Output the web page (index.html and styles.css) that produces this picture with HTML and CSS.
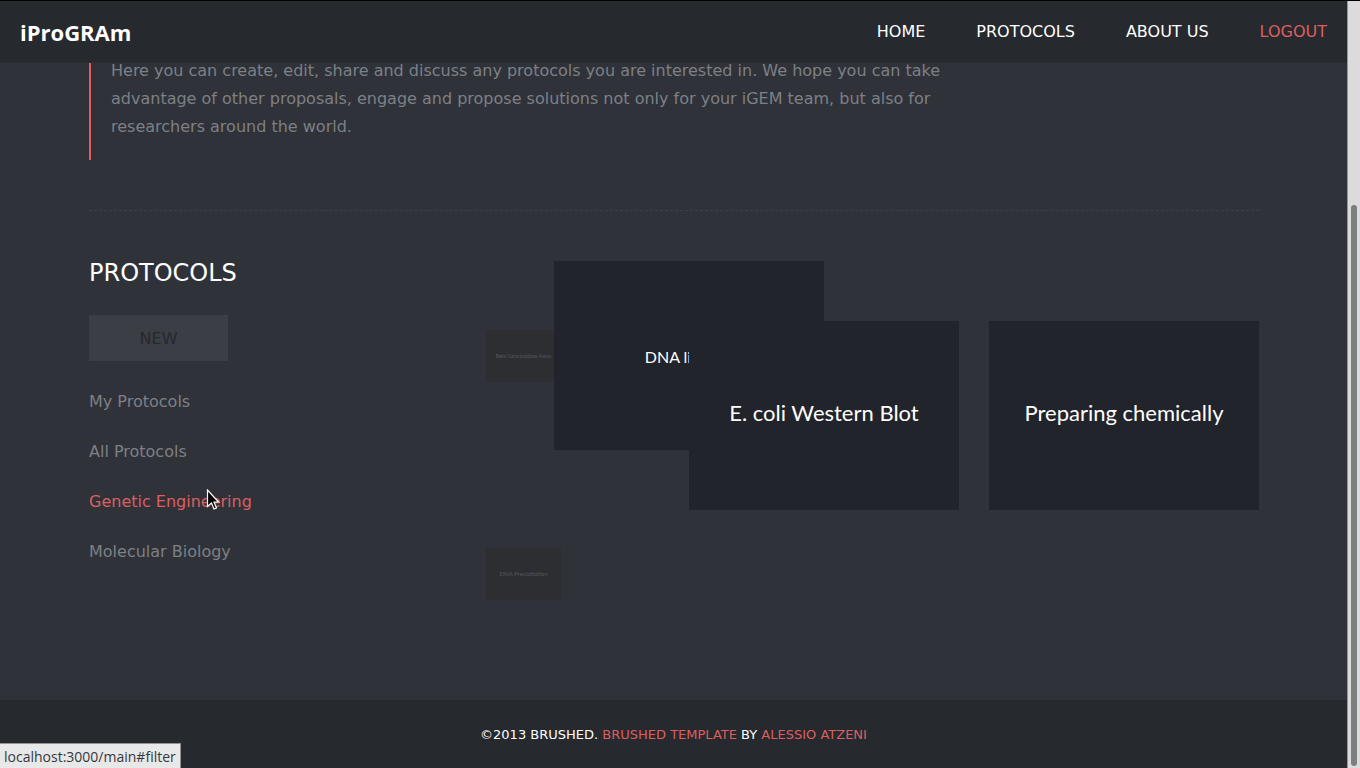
FILE: index.html
```html
<!DOCTYPE html>
<html lang="en">
<head>
<meta charset="utf-8">
<title>iProGRAm</title>
<link rel="stylesheet" href="styles.css">
</head>
<body>
<div class="browser">
  <div class="page">
    <header class="topbar">
      <a class="logo" href="#home">iProGRAm</a>
      <nav class="menu">
        <a href="#home">HOME</a>
        <a href="#protocols">PROTOCOLS</a>
        <a href="#about">ABOUT US</a>
        <a class="accent" href="#logout">LOGOUT</a>
      </nav>
    </header>
    <main class="container">
      <section class="intro">
        <p>Here you can create, edit, share and discuss any protocols you are interested in. We hope you can take advantage of other proposals, engage and propose solutions not only for your iGEM team, but also for researchers around the world.</p>
      </section>
      <section class="work">
        <aside class="filters">
          <h2>PROTOCOLS</h2>
          <button class="new" type="button">NEW</button>
          <ul>
            <li><a href="#filter">My Protocols</a></li>
            <li><a href="#filter">All Protocols</a></li>
            <li><a class="accent" href="#filter">Genetic Engineering</a></li>
            <li><a href="#filter">Molecular Biology</a></li>
          </ul>
        </aside>
        <div class="tiles">
          <div class="tile leaving assay"><span>Beta Galactosidase Assay</span></div>
          <div class="tile leaving precip"><span>DNA Precipitation</span></div>
          <div class="tile ligation"><span>DNA li</span></div>
          <div class="tile blot"><span>E. coli Western Blot</span></div>
          <div class="tile preparing"><span>Preparing chemically</span></div>
        </div>
      </section>
    </main>
    <footer class="footer">
      <p>©2013 BRUSHED. <a href="#template">BRUSHED TEMPLATE</a> BY <a href="#author">ALESSIO ATZENI</a></p>
    </footer>
  </div>
  <div class="scrollbar"><div class="thumb"></div></div>
</div>
<div class="status">localhost:3000/main#filter</div>
<svg class="cursor" width="14" height="22" viewBox="0 0 14 22" aria-hidden="true"><path d="M1.500 1V17.500L5.500 14L8 20L10.500 19L8 13H12.500Z" fill="#000" stroke="#fff" stroke-width="1.200"/></svg>
</body>
</html>
```
FILE: styles.css
```css
* { box-sizing: border-box; }

body {
  margin: 0;
  background: #2f3239;
  color: #7d8085;
  font: 16px/28px "DejaVu Sans", sans-serif;
}

h2, p, ul { margin: 0; padding: 0; font-weight: normal; }
ul { list-style: none; }
a { color: inherit; text-decoration: none; }

.browser {
  display: flex;
  min-height: 100vh;
  border-top: 1px solid #000;
}

.page {
  flex: 1;
  min-width: 0;
  display: flex;
  flex-direction: column;
}

.topbar {
  position: relative;
  z-index: 1;
  display: flex;
  align-items: center;
  justify-content: space-between;
  padding: 17px 20px 16px;
  background: #26292e;
  border-bottom: 1px solid #2b2d31;
}

.logo {
  color: #fff;
  font: bold 22px/26px "Open Sans", sans-serif;
}

.menu { display: flex; gap: 51px; color: #fff; }
.menu .accent, .filters .accent { color: #de5e60; }

.container {
  flex: 1;
  padding: 0 88px 0 89px;
}

.intro {
  padding-bottom: 50px;
  border-bottom: 1px dashed #3c3f46;
}

.intro p {
  max-width: 880px;
  border-left: 2px solid #de5e60;
  padding: 0 20px 19px;
  margin-top: -6px;
}

.work {
  display: flex;
  justify-content: space-between;
  padding-top: 46px;
}

.filters h2 {
  color: #fff;
  font-size: 24px;
  line-height: 32px;
  margin-bottom: 26px;
}

.new {
  display: block;
  min-width: 139px;
  padding: 10px 50px 8px;
  border: 0;
  background: #3c3e46;
  color: #26292e;
  font: inherit;
  margin-bottom: 27px;
}

.filters li { margin-bottom: 22px; }

/* Tiles in mid-transition, stacked on a free canvas */
.tiles {
  position: relative;
  width: 773px;
  height: 340px;
}

.tile {
  position: absolute;
  display: flex;
  align-items: center;
  justify-content: center;
  width: 270px;
  height: 189px;
  padding-bottom: 6px;
  background: #22242b;
  color: #fff;
  font: 22px/28px Lato, sans-serif;
  white-space: nowrap;
}

.leaving {
  width: 75px;
  height: 52px;
  padding: 0;
  background: #2d2e32;
  color: #55575e;
  font-size: 6px;
}

.assay { left: 0; top: 73px; font-size: 5px; }
.precip { left: 0; top: 291px; }
.ligation { left: 68px; top: 4px; padding: 2px 42px 0 0; font-size: 16px; }
.blot { left: 203px; top: 64px; }
.preparing { left: 503px; top: 64px; }

.footer {
  padding: 21px 20px 19px;
  background: #26292e;
  color: #fff;
  font-size: 13px;
  text-align: center;
}
.footer a { color: #de5e60; }

.scrollbar {
  display: flex;
  width: 13px;
  padding: 204px 3px 2px;
  background: #dcdadb;
  border-left: 1px solid #949494;
}
.thumb { flex: 1; border-radius: 3px; background: #7b7f7e; }

.status {
  position: fixed;
  left: 0;
  bottom: 0;
  padding: 2px 4px 1px;
  border: solid #949494;
  border-width: 1px 1px 0 0;
  background: #e8e8e8;
  color: #35383d;
  font: 14px/21px "Open Sans", sans-serif;
}

.cursor { position: fixed; left: 206px; top: 489px; }
```
